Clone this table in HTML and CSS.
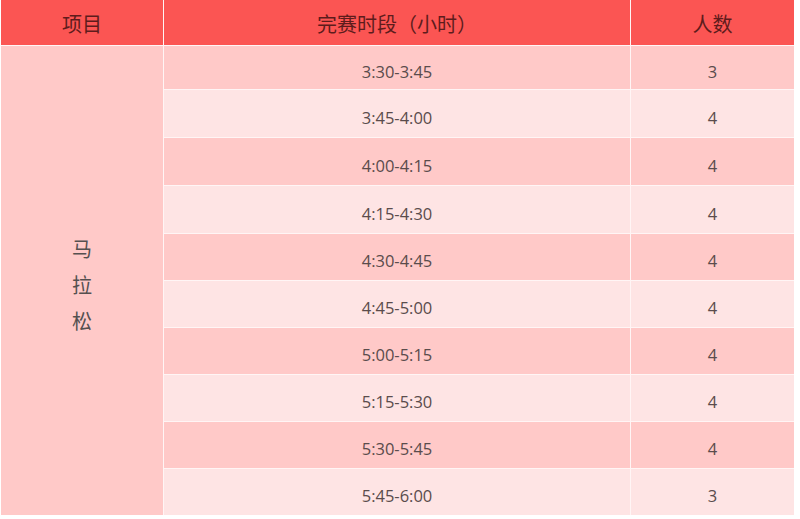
FILE: index.html
```html
<!DOCTYPE html>
<html lang="zh">
<head>
<meta charset="utf-8">
<link rel="stylesheet" href="styles.css">
</head>
<body>
<div class="table">
  <div class="th">项目</div>
  <div class="th">完赛时段（小时）</div>
  <div class="th">人数</div>
  <div class="item"><span>马</span><span>拉</span><span>松</span></div>
  <div class="td dark">3:30-3:45</div><div class="td dark">3</div>
  <div class="td light">3:45-4:00</div><div class="td light">4</div>
  <div class="td dark">4:00-4:15</div><div class="td dark">4</div>
  <div class="td light">4:15-4:30</div><div class="td light">4</div>
  <div class="td dark">4:30-4:45</div><div class="td dark">4</div>
  <div class="td light">4:45-5:00</div><div class="td light">4</div>
  <div class="td dark">5:00-5:15</div><div class="td dark">4</div>
  <div class="td light">5:15-5:30</div><div class="td light">4</div>
  <div class="td dark">5:30-5:45</div><div class="td dark">4</div>
  <div class="td light">5:45-6:00</div><div class="td light">3</div>
</div>
</body>
</html>
```
FILE: styles.css
```css
html, body {
  margin: 0;
  padding: 0;
  background: #ffffff;
}
.table {
  margin-left: 1px;
  width: 793px;
  display: grid;
  grid-template-columns: 162px 466px 163px;
  grid-template-rows: 45px 43px 47px 47px 47px 46px 46px 46px 46px 46px 46px;
  gap: 1px;
  background: #fff5f5;
  font-family: "Open Sans", "Noto Sans CJK SC", sans-serif;
}
.th {
  background: #fb5553;
  color: #5e1c1c;
  font-family: "Noto Sans CJK SC", sans-serif;
  font-size: 20px;
  display: flex;
  align-items: center;
  justify-content: center;
  padding-top: 1px;
}
.item {
  grid-row: 2 / 12;
  background: #ffc9c8;
  color: #555050;
  font-family: "Noto Sans CJK SC", sans-serif;
  font-size: 20px;
  line-height: 36px;
  display: flex;
  flex-direction: column;
  align-items: center;
  justify-content: center;
  padding-top: 8px;
}
.td {
  display: flex;
  align-items: center;
  justify-content: center;
  font-size: 16.5px;
  color: #5a4c4c;
  padding-top: 7px;
}
.dark {
  background: #ffc9c8;
}
.light {
  background: #fee4e4;
}
```
